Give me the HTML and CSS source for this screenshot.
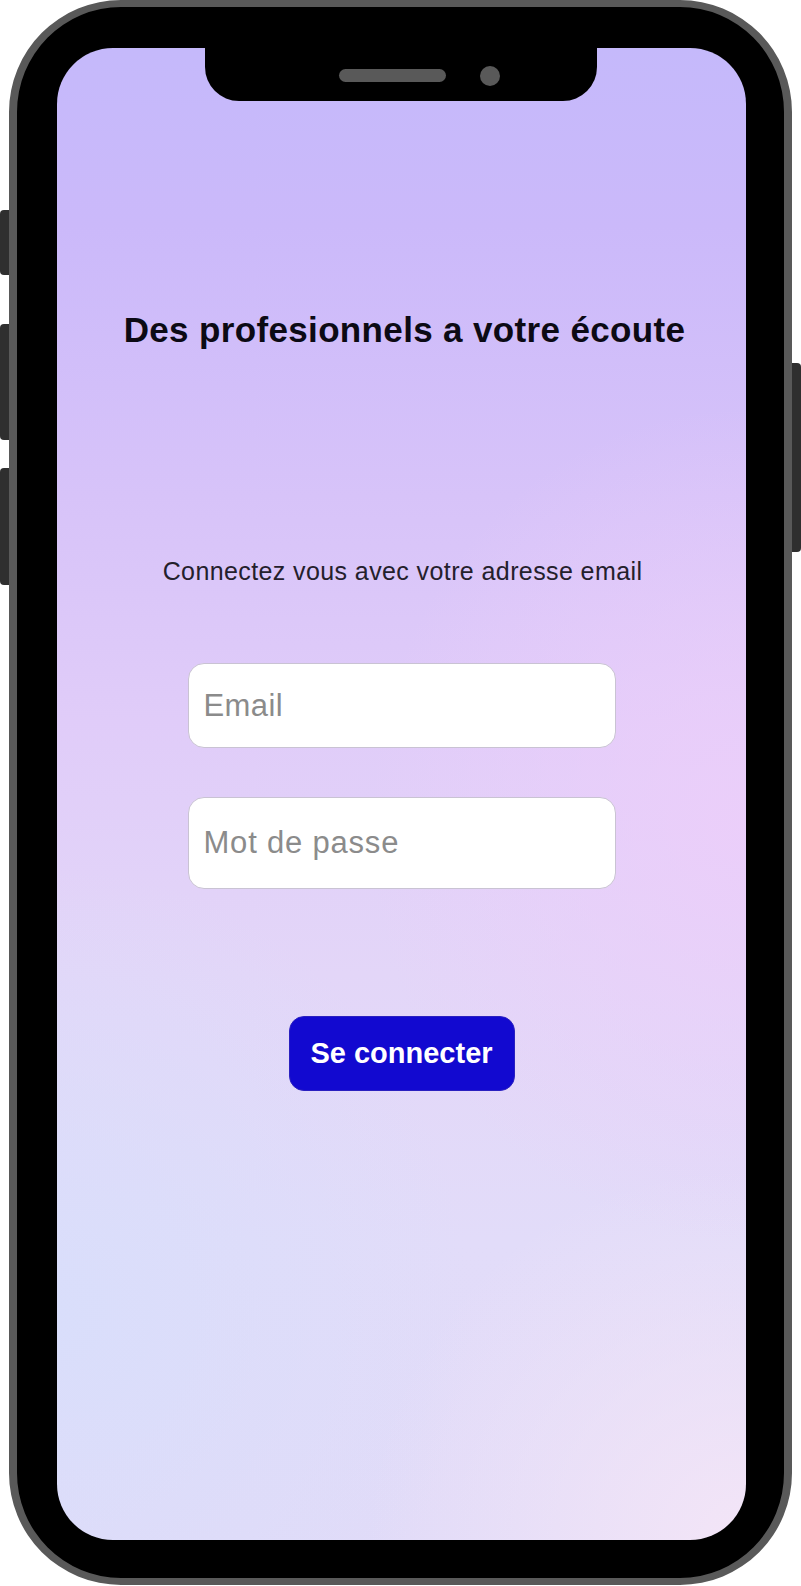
FILE: index.html
```html
<!DOCTYPE html>
<html lang="fr">
<head>
<meta charset="utf-8">
<title>Connexion</title>
<link rel="stylesheet" href="styles.css">
</head>
<body>
<div class="device">
  <span class="side-btn left b1"></span>
  <span class="side-btn left b2"></span>
  <span class="side-btn left b3"></span>
  <span class="side-btn right b4"></span>
  <div class="phone">
    <div class="screen">
      <div class="notch">
        <span class="speaker"></span>
        <span class="camera"></span>
      </div>
      <h1 class="title">Des profesionnels a votre écoute</h1>
      <p class="subtitle">Connectez vous avec votre adresse email</p>
      <input class="field field-email" type="email" placeholder="Email">
      <input class="field field-pass" type="password" placeholder="Mot de passe">
      <button class="login-btn" type="button">Se connecter</button>
    </div>
  </div>
</div>
</body>
</html>
```
FILE: styles.css
```css
* { box-sizing: border-box; }

html, body {
  margin: 0;
  padding: 0;
  background: #ffffff;
}

body {
  width: 801px;
  height: 1586px;
  font-family: "Liberation Sans", Arial, sans-serif;
  overflow: hidden;
}

.device {
  position: relative;
  width: 801px;
  height: 1586px;
  padding-left: 9px;
}

.side-btn {
  position: absolute;
  width: 10px;
  background: #2f2f2f;
}
.side-btn.left { left: 0; border-radius: 4px 0 0 4px; }
.side-btn.right { right: 0; border-radius: 0 4px 4px 0; }
.b1 { top: 210px; height: 65px; }
.b2 { top: 324px; height: 116px; }
.b3 { top: 468px; height: 117px; }
.b4 { top: 363px; height: 189px; }

.phone {
  position: relative;
  width: 783px;
  height: 1585px;
  background: #000;
  border-style: solid;
  border-color: #595959;
  border-width: 7px 8px 7px 8px;
  border-radius: 112px;
  padding: 41px 38px 38px 40px;
}

.screen {
  position: relative;
  width: 689px;
  height: 1492px;
  border-radius: 56px;
  overflow: hidden;
  display: flex;
  flex-direction: column;
  align-items: center;
  background:
    radial-gradient(ellipse 55% 28% at 100% 52%, rgba(236, 206, 250, 0.9), rgba(236, 206, 250, 0)),
    radial-gradient(ellipse 60% 30% at 0% 85%, rgba(217, 222, 251, 1), rgba(217, 222, 251, 0)),
    radial-gradient(ellipse 55% 25% at 100% 100%, rgba(243, 229, 247, 1), rgba(243, 229, 247, 0)),
    linear-gradient(180deg, #c5b9fb 0%, #cbb9fa 12%, #d7c3f9 30%, #e0ccf9 45%, #e3d6f8 62%, #e2dcf9 80%, #e1dbf8 100%);
}

.notch {
  position: absolute;
  top: 0;
  left: 148px;
  width: 392px;
  height: 53px;
  background: #000;
  border-radius: 0 0 34px 34px;
  display: flex;
  align-items: center;
  justify-content: center;
  gap: 34px;
  padding-top: 2px;
  padding-left: 36px;
}

.speaker {
  width: 107px;
  height: 13px;
  border-radius: 7px;
  background: #595959;
}

.camera {
  width: 20px;
  height: 20px;
  border-radius: 50%;
  background: #595959;
}

.title {
  margin: 264px 0 0 6px;
  font-size: 35px;
  line-height: 35px;
  font-weight: 700;
  letter-spacing: 0.35px;
  color: #0c0a14;
  white-space: nowrap;
}

.subtitle {
  margin: 212px 0 0 2px;
  font-size: 25px;
  line-height: 25px;
  letter-spacing: 0.4px;
  color: #24202c;
  white-space: nowrap;
}

.field {
  display: block;
  width: 428px;
  margin: 0;
  background: #ffffff;
  border: 1px solid #c9c3d3;
  border-radius: 16px;
  padding: 0 15px;
  font-family: "Liberation Sans", Arial, sans-serif;
  font-size: 31px;
  letter-spacing: 0.4px;
  color: #333;
  outline: none;
}
.field::placeholder { color: #8b8b8b; }

.field-email {
  margin-top: 79px;
  height: 85px;
}

.field-pass {
  margin-top: 49px;
  height: 92px;
  letter-spacing: 0.8px;
}

.login-btn {
  margin-top: 127px;
  width: 226px;
  height: 75px;
  border: 1px solid #2a20c0;
  border-radius: 15px;
  background: #1209d0;
  color: #ffffff;
  font-family: "Liberation Sans", Arial, sans-serif;
  font-size: 29px;
  font-weight: 700;
  padding: 0;
}
```
